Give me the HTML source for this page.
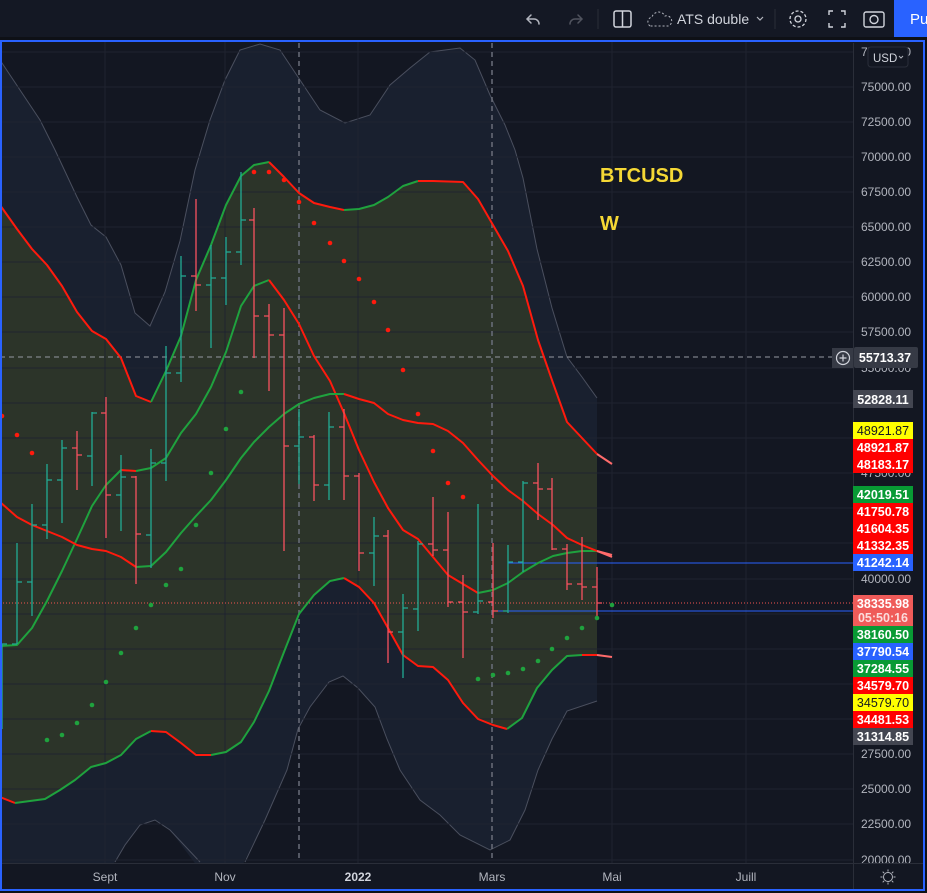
<!DOCTYPE html>
<html><head><meta charset="utf-8"><style>
html,body{margin:0;padding:0;background:#0e1016;width:927px;height:893px;overflow:hidden;font-family:"Liberation Sans",sans-serif}
svg{display:block}
</style></head><body>
<svg width="927" height="893" viewBox="0 0 927 893" xmlns="http://www.w3.org/2000/svg" font-family="Liberation Sans, sans-serif">
<rect x="0" y="0" width="927" height="893" fill="#0e1016"/>
<rect x="0" y="0" width="927" height="37" fill="#141824"/>
<g stroke="#b2b5be" stroke-width="1.5" fill="none" stroke-linecap="round">
<path d="M531 15 l-4 4 l4 4 M527 19 h7 a5 5 0 0 1 5 5"/>
</g>
<g stroke="#50535e" stroke-width="1.5" fill="none" stroke-linecap="round">
<path d="M578 15 l4 4 l-4 4 M582 19 h-7 a5 5 0 0 0 -5 5"/>
</g>
<line x1="598" y1="9" x2="598" y2="29" stroke="#2a2e39"/>
<rect x="614" y="11" width="17" height="16" rx="2" fill="none" stroke="#d1d4dc" stroke-width="1.5"/>
<line x1="622.5" y1="11" x2="622.5" y2="27" stroke="#d1d4dc" stroke-width="1.5"/>
<path d="M650 26 a5 5 0 0 1 2 -9 a7 7 0 0 1 13 -1 a5 5 0 0 1 3 10 z" fill="none" stroke="#b2b5be" stroke-dasharray="2 2"/>
<text x="677" y="24" font-size="14" fill="#d1d4dc">ATS double</text>
<path d="M757 17 l3 3 l3 -3" fill="none" stroke="#b2b5be" stroke-width="1.2"/>
<line x1="775" y1="9" x2="775" y2="29" stroke="#2a2e39"/>
<circle cx="798" cy="19" r="3" fill="none" stroke="#d1d4dc" stroke-width="1.3"/>
<circle cx="798" cy="19" r="8" fill="none" stroke="#d1d4dc" stroke-width="1.3" stroke-dasharray="3 2"/>
<path d="M829 15 v-4 h4 M841 11 h4 v4 M845 23 v4 h-4 M833 27 h-4 v-4" fill="none" stroke="#d1d4dc" stroke-width="1.4"/>
<rect x="864" y="12" width="20" height="15" rx="2" fill="none" stroke="#d1d4dc" stroke-width="1.4"/>
<circle cx="874" cy="19.5" r="4" fill="none" stroke="#d1d4dc" stroke-width="1.4"/>
<rect x="894" y="0" width="33" height="37" fill="#2962ff"/>
<text x="910" y="24" font-size="15" fill="#fff">Pu</text>

<rect x="1" y="41" width="923" height="850" fill="#131722"/>
<path d="M0 60 L20 90 L40 120 L55 150 L77 197 L91 225 L106 237 L121 265 L135 313 L150 326 L165 292 L180 241 L195 170 L210 120 L225 80 L240 50 L260 44 L280 50 L300 80 L320 110 L345 123 L370 115 L390 85 L410 68 L430 52 L460 48 L475 60 L490 95 L505 125 L515 150 L523 178 L537 249 L552 308 L567 357 L582 377 L597 398 L597 701 L567 711 L552 739 L538 770 L525 810 L510 840 L490 850 L460 835 L440 815 L420 800 L400 770 L387 739 L375 707 L358 688 L343 676 L329 682 L310 707 L298 729 L287 770 L265 820 L240 870 L200 870 L170 830 L155 820 L140 825 L125 845 L110 870 L0 870 Z" fill="#19202f"/>
<path d="M0 60 L20 90 L40 120 L55 150 L77 197 L91 225 L106 237 L121 265 L135 313 L150 326 L165 292 L180 241 L195 170 L210 120 L225 80 L240 50 L260 44 L280 50 L300 80 L320 110 L345 123 L370 115 L390 85 L410 68 L430 52 L460 48 L475 60 L490 95 L505 125 L515 150 L523 178 L537 249 L552 308 L567 357 L582 377 L597 398" fill="none" stroke="#4a4f5e" stroke-width="1"/>
<path d="M597 701 L567 711 L552 739 L538 770 L525 810 L510 840 L490 850 L460 835 L440 815 L420 800 L400 770 L387 739 L375 707 L358 688 L343 676 L329 682 L310 707 L298 729 L287 770 L265 820 L245 862 M200 862 L170 830 L155 820 L140 825 L125 845 L115 862" fill="none" stroke="#4a4f5e" stroke-width="1"/>
<path d="M0 205 L17 229 L32 249 L47 265 L62 286 L77 312 L92 331 L106 339 L121 358 L136 396 L151 402 L166 371 L181 336 L196 280 L211 245 L226 205 L241 176 L254 165 L269 162 L284 177 L299 193 L314 203 L330 207 L344 210 L359 209 L374 205 L388 197 L403 186 L418 181 L433 181 L463 182 L478 199 L493 225 L508 251 L523 286 L538 340 L553 383 L567 422 L582 438 L597 454 L597 655 L582 655 L567 656 L552 670 L537 688 L522 718 L507 729 L493 725 L478 719 L463 703 L448 680 L433 667 L418 666 L403 655 L388 628 L374 603 L359 587 L344 578 L330 581 L314 595 L299 614 L284 652 L269 691 L254 722 L241 742 L226 752 L211 755 L196 755 L181 743 L166 732 L151 731 L136 739 L121 755 L106 763 L91 767 L75 780 L60 790 L45 799 L15 803 L0 797 Z" fill="#2c3429"/>
<g stroke="#1f2330" stroke-width="1">
<line x1="0" y1="52" x2="853" y2="52"/><line x1="0" y1="87" x2="853" y2="87"/><line x1="0" y1="122" x2="853" y2="122"/><line x1="0" y1="157" x2="853" y2="157"/><line x1="0" y1="192" x2="853" y2="192"/><line x1="0" y1="227" x2="853" y2="227"/><line x1="0" y1="262" x2="853" y2="262"/><line x1="0" y1="297" x2="853" y2="297"/><line x1="0" y1="332" x2="853" y2="332"/><line x1="0" y1="368" x2="853" y2="368"/><line x1="0" y1="403" x2="853" y2="403"/><line x1="0" y1="438" x2="853" y2="438"/><line x1="0" y1="473" x2="853" y2="473"/><line x1="0" y1="508" x2="853" y2="508"/><line x1="0" y1="543" x2="853" y2="543"/><line x1="0" y1="579" x2="853" y2="579"/><line x1="0" y1="614" x2="853" y2="614"/><line x1="0" y1="649" x2="853" y2="649"/><line x1="0" y1="684" x2="853" y2="684"/><line x1="0" y1="719" x2="853" y2="719"/><line x1="0" y1="754" x2="853" y2="754"/><line x1="0" y1="789" x2="853" y2="789"/><line x1="0" y1="824" x2="853" y2="824"/><line x1="0" y1="860" x2="853" y2="860"/>
<line x1="105" y1="41" x2="105" y2="863"/><line x1="225" y1="41" x2="225" y2="863"/><line x1="358" y1="41" x2="358" y2="863"/><line x1="612" y1="41" x2="612" y2="863"/><line x1="746" y1="41" x2="746" y2="863"/>
</g>
<line x1="299" y1="43" x2="299" y2="862" stroke="#6a6e7a" stroke-width="1.5" stroke-dasharray="5 4"/>
<line x1="492" y1="43" x2="492" y2="862" stroke="#6a6e7a" stroke-width="1.5" stroke-dasharray="5 4"/>
<line x1="0" y1="357" x2="832" y2="357" stroke="#9598a1" stroke-width="1" stroke-dasharray="5 4"/>
<line x1="508" y1="563" x2="853" y2="563" stroke="#2962ff" stroke-width="1"/>
<line x1="493" y1="611" x2="853" y2="611" stroke="#2962ff" stroke-width="1"/>
<line x1="0" y1="603" x2="853" y2="603" stroke="#f05350" stroke-width="1" stroke-dasharray="1 2"/>

<g fill="none" stroke-width="2" stroke-linejoin="round">
<polyline stroke="#ff1a0d" points="0,205 17,229 32,249 47,265 62,286 77,312 92,331 106,339 121,358 136,396 151,402"/>
<polyline stroke="#1fa23e" points="151,402 166,371 181,336 196,280 211,245 226,205 241,176 254,165 269,162"/>
<polyline stroke="#ff1a0d" points="269,162 284,177 299,193 314,203 330,207 344,210"/>
<polyline stroke="#1fa23e" points="344,210 359,209 374,205 388,197 403,186 418,181"/>
<polyline stroke="#ff1a0d" points="418,181 433,181 463,182 478,199 493,225 508,251 523,286 538,340 553,383 567,422 582,438 597,454"/>
<polyline stroke="#ff6b6b" points="597,454 612,464"/>

<polyline stroke="#1fa23e" points="0,646 17,645 32,628 47,601 62,571 77,539 92,506 106,485 121,470"/>
<polyline stroke="#ff1a0d" points="121,470 136,471"/>
<polyline stroke="#1fa23e" points="136,471 151,468 166,458 181,433 196,414 211,387 226,352 241,306 254,286 269,280"/>
<polyline stroke="#ff1a0d" points="269,280 284,300 299,324 314,356 330,381 344,413 359,450 374,482 388,508 403,530 418,539 433,557 448,575 463,584 478,593"/>
<polyline stroke="#1fa23e" points="478,593 493,590 508,583 523,572 538,563 553,556 567,553 582,551 597,551"/>
<polyline stroke="#ff6b6b" points="597,551 612,557"/>

<polyline stroke="#ff1a0d" points="0,502 17,517 32,525 47,531 62,537 77,545 92,549 106,551 121,557 136,567"/>
<polyline stroke="#1fa23e" points="136,567 151,566 166,552 181,533 196,516 211,500 226,480 241,458 254,442 269,427 284,414 299,404 314,398 330,394 344,394"/>
<polyline stroke="#ff1a0d" points="344,394 359,399 374,403 388,414 403,420 418,423 433,424 448,431 463,443 478,460 493,476 508,490 523,501 538,514 553,525 567,538 582,545 597,551"/>
<polyline stroke="#ff6b6b" points="597,551 612,555"/>

<polyline stroke="#ff1a0d" points="0,797 15,803"/>
<polyline stroke="#1fa23e" points="15,803 45,799 60,790 75,780 91,767 106,763 121,755 136,739 151,731"/>
<polyline stroke="#ff1a0d" points="151,731 166,732 181,743 196,755 211,755"/>
<polyline stroke="#1fa23e" points="211,755 226,752 241,742 254,722 269,691 284,652 299,614 314,595 330,581 344,578"/>
<polyline stroke="#ff1a0d" points="344,578 359,587 374,603 388,628 403,655 418,666 433,667 448,680 463,703 478,719 493,725 507,729"/>
<polyline stroke="#1fa23e" points="507,729 522,718 537,688 552,670 567,656 582,655"/>
<polyline stroke="#ff1a0d" points="582,655 597,655"/>
<polyline stroke="#ff6b6b" points="597,655 612,657"/>
</g>

<g stroke-width="1.3" fill="none">
<g stroke="#22ab94">
<path d="M2 644V729M2 644h5"/>
<path d="M17 543V644M12 644h5M17 582h5"/>
<path d="M32 504V616M27 582h5M32 525h5"/>
<path d="M47 464V539M42 525h5M47 480h5"/>
<path d="M62 440V523M57 480h5M62 448h5"/>
<path d="M92 412V486M87 456h5M92 413h5"/>
<path d="M121 455V531M116 495h5M121 477h5"/>
<path d="M151 449V568M146 535h5M151 463h5"/>
<path d="M166 346V481M161 463h5M166 373h5"/>
<path d="M181 256V382M176 373h5M181 276h5"/>
<path d="M211 245V348M206 285h5M211 278h5"/>
<path d="M226 237V305M221 278h5M226 252h5"/>
<path d="M241 172V265M236 252h5M241 220h5"/>
<path d="M299 409V484M294 446h5M299 437h5"/>
<path d="M329 412V500M324 485h5M329 427h5"/>
<path d="M374 517V586M369 553h5M374 536h5"/>
<path d="M403 594V678M398 632h5M403 608h5"/>
<path d="M418 541V631M413 609h5M418 544h5"/>
<path d="M478 504V614M473 612h5M478 601h5"/>
<path d="M508 545V613M503 611h5M508 562h5"/>
<path d="M523 481V572M518 562h5M523 483h5"/>
</g>
<g stroke="#f7525f">
<path d="M77 431V490M72 448h5M77 455h5"/>
<path d="M106 397V538M101 413h5M106 495h5"/>
<path d="M136 476V584M131 477h5M136 534h5"/>
<path d="M196 199V311M191 276h5M196 285h5"/>
<path d="M254 208V358M249 220h5M254 316h5"/>
<path d="M269 304V391M264 316h5M269 335h5"/>
<path d="M284 308V551M279 335h5M284 446h5"/>
<path d="M314 435V501M309 437h5M314 485h5"/>
<path d="M344 409V500M339 427h5M344 476h5"/>
<path d="M359 473V571M354 476h5M359 553h5"/>
<path d="M388 530V663M383 536h5M388 632h5"/>
<path d="M433 497V556M428 544h5M433 550h5"/>
<path d="M448 512V607M443 550h5M448 602h5"/>
<path d="M463 575V658M458 602h5M463 612h5"/>
<path d="M493 543V618M488 602h5M493 611h5"/>
<path d="M538 463V520M533 483h5M538 489h5"/>
<path d="M552 478V550M547 489h5M552 549h5"/>
<path d="M567 544V590M562 549h5M567 584h5"/>
<path d="M582 537V600M577 584h5M582 587h5"/>
<path d="M597 567V618M592 587h5M597 603h5"/>
</g>
</g>

<g fill="#ff1a0d">
<circle cx="2" cy="416" r="2.3"/><circle cx="17" cy="435" r="2.3"/><circle cx="32" cy="453" r="2.3"/>
<circle cx="254" cy="172" r="2.3"/><circle cx="269" cy="172" r="2.3"/><circle cx="284" cy="180" r="2.3"/><circle cx="299" cy="202" r="2.3"/>
<circle cx="314" cy="223" r="2.3"/><circle cx="330" cy="243" r="2.3"/><circle cx="344" cy="261" r="2.3"/><circle cx="359" cy="279" r="2.3"/><circle cx="374" cy="302" r="2.3"/><circle cx="388" cy="330" r="2.3"/><circle cx="403" cy="370" r="2.3"/><circle cx="418" cy="414" r="2.3"/><circle cx="433" cy="451" r="2.3"/><circle cx="448" cy="483" r="2.3"/><circle cx="463" cy="497" r="2.3"/>
</g>
<g fill="#1fa23e">
<circle cx="47" cy="740" r="2.3"/><circle cx="62" cy="735" r="2.3"/><circle cx="77" cy="723" r="2.3"/><circle cx="92" cy="705" r="2.3"/><circle cx="106" cy="682" r="2.3"/><circle cx="121" cy="653" r="2.3"/><circle cx="136" cy="628" r="2.3"/><circle cx="151" cy="605" r="2.3"/><circle cx="166" cy="585" r="2.3"/><circle cx="181" cy="569" r="2.3"/><circle cx="196" cy="525" r="2.3"/><circle cx="211" cy="473" r="2.3"/><circle cx="226" cy="429" r="2.3"/><circle cx="241" cy="392" r="2.3"/>
<circle cx="478" cy="679" r="2.3"/><circle cx="493" cy="675" r="2.3"/><circle cx="508" cy="673" r="2.3"/><circle cx="523" cy="669" r="2.3"/><circle cx="538" cy="661" r="2.3"/><circle cx="552" cy="649" r="2.3"/><circle cx="567" cy="638" r="2.3"/><circle cx="582" cy="628" r="2.3"/><circle cx="597" cy="618" r="2.3"/><circle cx="612" cy="605" r="2.3"/>
</g>

<text x="600" y="182" font-size="20" font-weight="bold" fill="#f5d835">BTCUSD</text>
<text x="600" y="230" font-size="20" font-weight="bold" fill="#f5d835">W</text>

<rect x="832" y="348" width="21" height="20" fill="#363a45"/>
<circle cx="843" cy="358" r="6.5" fill="none" stroke="#d1d4dc" stroke-width="1.2"/>
<path d="M843 354.5v7M839.5 358h7" stroke="#d1d4dc" stroke-width="1.2"/>

<rect x="853" y="43" width="70" height="820" fill="#131722"/>
<line x1="853.5" y1="43" x2="853.5" y2="891" stroke="#2a2e39"/>
<g font-size="12" fill="#b2b5be">
<text x="861" y="56">77500.00</text>
<text x="861" y="91">75000.00</text><text x="861" y="126">72500.00</text><text x="861" y="161">70000.00</text><text x="861" y="196">67500.00</text><text x="861" y="231">65000.00</text><text x="861" y="266">62500.00</text><text x="861" y="301">60000.00</text><text x="861" y="336">57500.00</text><text x="861" y="372">55000.00</text><text x="861" y="477">47500.00</text><text x="861" y="583">40000.00</text><text x="861" y="758">27500.00</text><text x="861" y="793">25000.00</text><text x="861" y="828">22500.00</text><text x="861" y="864">20000.00</text>
</g>
<rect x="868" y="47" width="40" height="20" rx="3" fill="#131722" stroke="#2a2e39"/>
<text x="873" y="62" font-size="11.5" fill="#d1d4dc">USD</text>
<path d="M899 56 l2 2 l2 -2" fill="none" stroke="#b2b5be"/>

<g font-size="12.5" font-weight="bold" text-anchor="middle">
<rect x="854" y="347" width="64" height="21" rx="2" fill="#363a45"/><text x="885" y="362" fill="#fff">55713.37</text>
<rect x="853" y="390" width="60" height="18" fill="#434651"/><text x="883" y="404" fill="#fff">52828.11</text>
<rect x="853" y="422" width="60" height="17" fill="#ffff00"/><text x="883" y="435" fill="#131722" font-weight="normal">48921.87</text>
<rect x="853" y="439" width="60" height="17" fill="#ff0000"/><text x="883" y="452" fill="#fff">48921.87</text>
<rect x="853" y="456" width="60" height="17" fill="#ff0000"/><text x="883" y="469" fill="#fff">48183.17</text>
<rect x="853" y="486" width="60" height="17" fill="#089a34"/><text x="883" y="499" fill="#fff">42019.51</text>
<rect x="853" y="503" width="60" height="17" fill="#ff0000"/><text x="883" y="516" fill="#fff">41750.78</text>
<rect x="853" y="520" width="60" height="17" fill="#ff0000"/><text x="883" y="533" fill="#fff">41604.35</text>
<rect x="853" y="537" width="60" height="17" fill="#ff0000"/><text x="883" y="550" fill="#fff">41332.35</text>
<rect x="853" y="554" width="60" height="17" fill="#2962ff"/><text x="883" y="567" fill="#fff">41242.14</text>
<rect x="853" y="595" width="60" height="31" fill="#ef5b59"/><text x="883" y="608" fill="#fff">38335.98</text><text x="883" y="622" fill="#fbdcdc">05:50:16</text>
<rect x="853" y="626" width="60" height="17" fill="#089a34"/><text x="883" y="639" fill="#fff">38160.50</text>
<rect x="853" y="643" width="60" height="17" fill="#2962ff"/><text x="883" y="656" fill="#fff">37790.54</text>
<rect x="853" y="660" width="60" height="17" fill="#089a34"/><text x="883" y="673" fill="#fff">37284.55</text>
<rect x="853" y="677" width="60" height="17" fill="#ff0000"/><text x="883" y="690" fill="#fff">34579.70</text>
<rect x="853" y="694" width="60" height="17" fill="#ffff00"/><text x="883" y="707" fill="#131722" font-weight="normal">34579.70</text>
<rect x="853" y="711" width="60" height="17" fill="#ff0000"/><text x="883" y="724" fill="#fff">34481.53</text>
<rect x="853" y="728" width="60" height="17" fill="#434651"/><text x="883" y="741" fill="#fff">31314.85</text>
</g>

<rect x="1" y="864" width="922" height="26" fill="#131722"/>
<line x1="853.5" y1="864" x2="853.5" y2="891" stroke="#2a2e39"/>
<line x1="1" y1="863.5" x2="923" y2="863.5" stroke="#2a2e39"/>
<g font-size="12" fill="#b2b5be" text-anchor="middle">
<text x="105" y="881">Sept</text><text x="225" y="881">Nov</text><text x="358" y="881" font-weight="bold" fill="#d1d4dc">2022</text><text x="492" y="881">Mars</text><text x="612" y="881">Mai</text><text x="746" y="881">Juill</text>
</g>
<circle cx="888" cy="877" r="4.5" fill="none" stroke="#b2b5be"/>
<path d="M888 869.5v2M888 882.5v2M880.5 877h2M893.5 877h2M882.7 871.7l1.4 1.4M891.9 880.9l1.4 1.4M882.7 882.3l1.4-1.4M891.9 873.1l1.4-1.4" stroke="#b2b5be"/>

<rect x="1" y="41" width="923" height="849" fill="none" stroke="#2962ff" stroke-width="2"/>
</svg>
</body></html>
